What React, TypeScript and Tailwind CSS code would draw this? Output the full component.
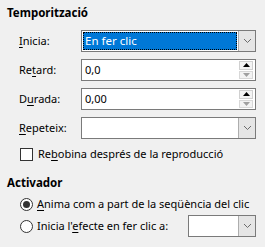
import React from 'react';

const font = { fontFamily: '"Noto Sans", "Open Sans", sans-serif' };

function Chevron() {
  return (
    <svg width="9" height="6" viewBox="0 0 9 6" className="block">
      <path d="M1 1 L4.5 4.5 L8 1" fill="none" stroke="#6b6b6b" strokeWidth="1" />
    </svg>
  );
}

function DropButton() {
  return (
    <div className="flex h-full w-[17px] items-center justify-center border-l border-[#adadad] bg-[#e5e5e5]">
      <Chevron />
    </div>
  );
}

function Spin() {
  return (
    <div className="flex h-full flex-col justify-center gap-[1px] py-[1px] pr-[2px]">
      <div className="flex h-[9px] w-[14px] items-center justify-center border border-[#d0d0d0] bg-[#f3f3f3]">
        <svg width="7" height="4" viewBox="0 0 7 4"><path d="M0 4 L3.5 0 L7 4 Z" fill="#000" /></svg>
      </div>
      <div className="flex h-[9px] w-[14px] items-center justify-center border border-[#d8d8d8] bg-[#f3f3f3]">
        <svg width="7" height="4" viewBox="0 0 7 4"><path d="M0 0 L3.5 4 L7 0 Z" fill="#a0a0a0" /></svg>
      </div>
    </div>
  );
}

function Label({ pre, key_, post }: { pre: string; key_: string; post: string }) {
  return (
    <span className="w-[62px] shrink-0 text-[#000]">
      {pre}
      <span className="underline underline-offset-2">{key_}</span>
      {post}
    </span>
  );
}

export default function App() {
  return (
    <div style={font} className="h-[247px] w-[265px] overflow-hidden bg-[#f0f0f0] text-[11px] leading-[16px] text-black">
      <div className="pl-[7px] pt-[5px] text-[11.5px] font-bold">Temporització</div>

      <div className="mt-[9px] flex flex-col gap-[7px] pl-[19px] pr-[9px]">
        <div className="flex h-[22px] items-center">
          <Label pre="" key_="I" post="nicia:" />
          <div className="flex h-full flex-1 border border-[#7a7a7a] bg-white">
            <div className="m-[1px] flex flex-1 items-center border border-dotted border-black bg-[#0078d7] pl-[1px] text-[11.5px] text-white">
              En fer clic
            </div>
            <DropButton />
          </div>
        </div>

        <div className="flex h-[22px] items-center">
          <Label pre="Re" key_="t" post="ard:" />
          <div className="flex h-full flex-1 items-center border border-[#7a7a7a] bg-white">
            <span className="flex-1 pl-[3px]">0,0</span>
            <Spin />
          </div>
        </div>

        <div className="flex h-[22px] items-center">
          <Label pre="D" key_="u" post="rada:" />
          <div className="flex h-full flex-1 items-center border border-[#7a7a7a] bg-white">
            <span className="flex-1 pl-[3px]">0,00</span>
            <Spin />
          </div>
        </div>

        <div className="flex h-[22px] items-center">
          <Label pre="" key_="R" post="epeteix:" />
          <div className="flex h-full flex-1 border border-[#7a7a7a] bg-white">
            <div className="flex-1" />
            <DropButton />
          </div>
        </div>
      </div>

      <div className="mt-[7px] flex items-center gap-[5px] pl-[20px]">
        <div className="h-[13px] w-[13px] border border-[#333] bg-white" />
        <span>
          Re<span className="underline underline-offset-2">b</span>obina després de la reproducció
        </span>
      </div>

      <div className="mt-[13px] pl-[7px] text-[11.5px] font-bold">Activador</div>

      <div className="mt-[5px] flex items-center gap-[4px] whitespace-nowrap pl-[20px]">
        <div className="flex h-[13px] w-[13px] items-center justify-center rounded-full border border-[#333] bg-white">
          <div className="h-[7px] w-[7px] rounded-full bg-[#333]" />
        </div>
        <span>
          <span className="underline underline-offset-2">A</span>nima com a part de la seqüència del clic
        </span>
      </div>

      <div className="mt-[3px] flex h-[22px] items-center whitespace-nowrap pl-[20px] pr-[9px]">
        <div className="h-[13px] w-[13px] rounded-full border border-[#333] bg-white" />
        <span className="ml-[4px] flex-1">
          Inicia l'<span className="underline underline-offset-2">e</span>fecte en fer clic a:
        </span>
        <div className="flex h-full w-[68px] border border-[#7a7a7a] bg-white">
          <div className="flex-1" />
          <DropButton />
        </div>
      </div>
    </div>
  );
}
